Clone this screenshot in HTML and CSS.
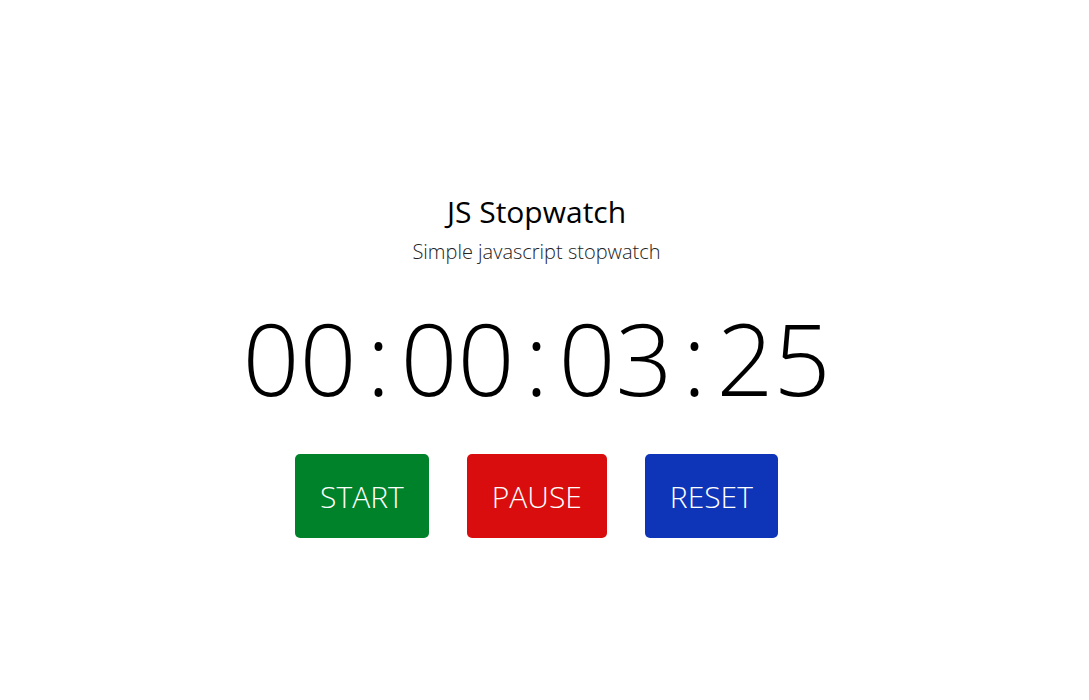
FILE: index.html
```html
<!DOCTYPE html>
<html>
<head>
<meta charset="utf-8">
<link rel="stylesheet" href="styles.css">
</head>
<body>
<main class="app">
  <h1 class="title">JS Stopwatch</h1>
  <p class="subtitle">Simple javascript stopwatch</p>
  <div class="timer">
    <span class="num">00</span><span class="sep">:</span><span class="num">00</span><span class="sep">:</span><span class="num">03</span><span class="sep">:</span><span class="num">25</span>
  </div>
  <div class="controls">
    <button class="btn btn-start">START</button>
    <button class="btn btn-pause">PAUSE</button>
    <button class="btn btn-reset">RESET</button>
  </div>
</main>
</body>
</html>
```
FILE: styles.css
```css
* { box-sizing: border-box; }
html, body { margin: 0; padding: 0; background: #fff; }
body { font-family: "Open Sans", "Noto Sans", sans-serif; color: #000; }
.app {
  display: flex;
  flex-direction: column;
  align-items: center;
  padding-top: 190px;
  padding-right: 16px;
}
.title {
  margin: 0;
  font-size: 30px;
  font-weight: 400;
  line-height: 44px;
}
.subtitle {
  margin: 4px 0 0;
  font-size: 20px;
  font-weight: 300;
  line-height: 28px;
  color: #222;
}
.timer {
  margin-top: 26px;
  font-size: 100px;
  font-weight: 300;
  line-height: 130px;
  display: flex;
}
.sep { margin: 0 10px; }
.controls {
  margin-top: 32px;
  display: flex;
  gap: 38px;
}
.btn {
  font-family: inherit;
  font-size: 30px;
  font-weight: 300;
  color: #fff;
  border: none;
  border-radius: 5px;
  height: 84px;
  padding: 0 25px;
}
.btn-start { background: #00822a; }
.btn-pause { background: #d90d0d; }
.btn-reset { background: #0e35b8; }
```
